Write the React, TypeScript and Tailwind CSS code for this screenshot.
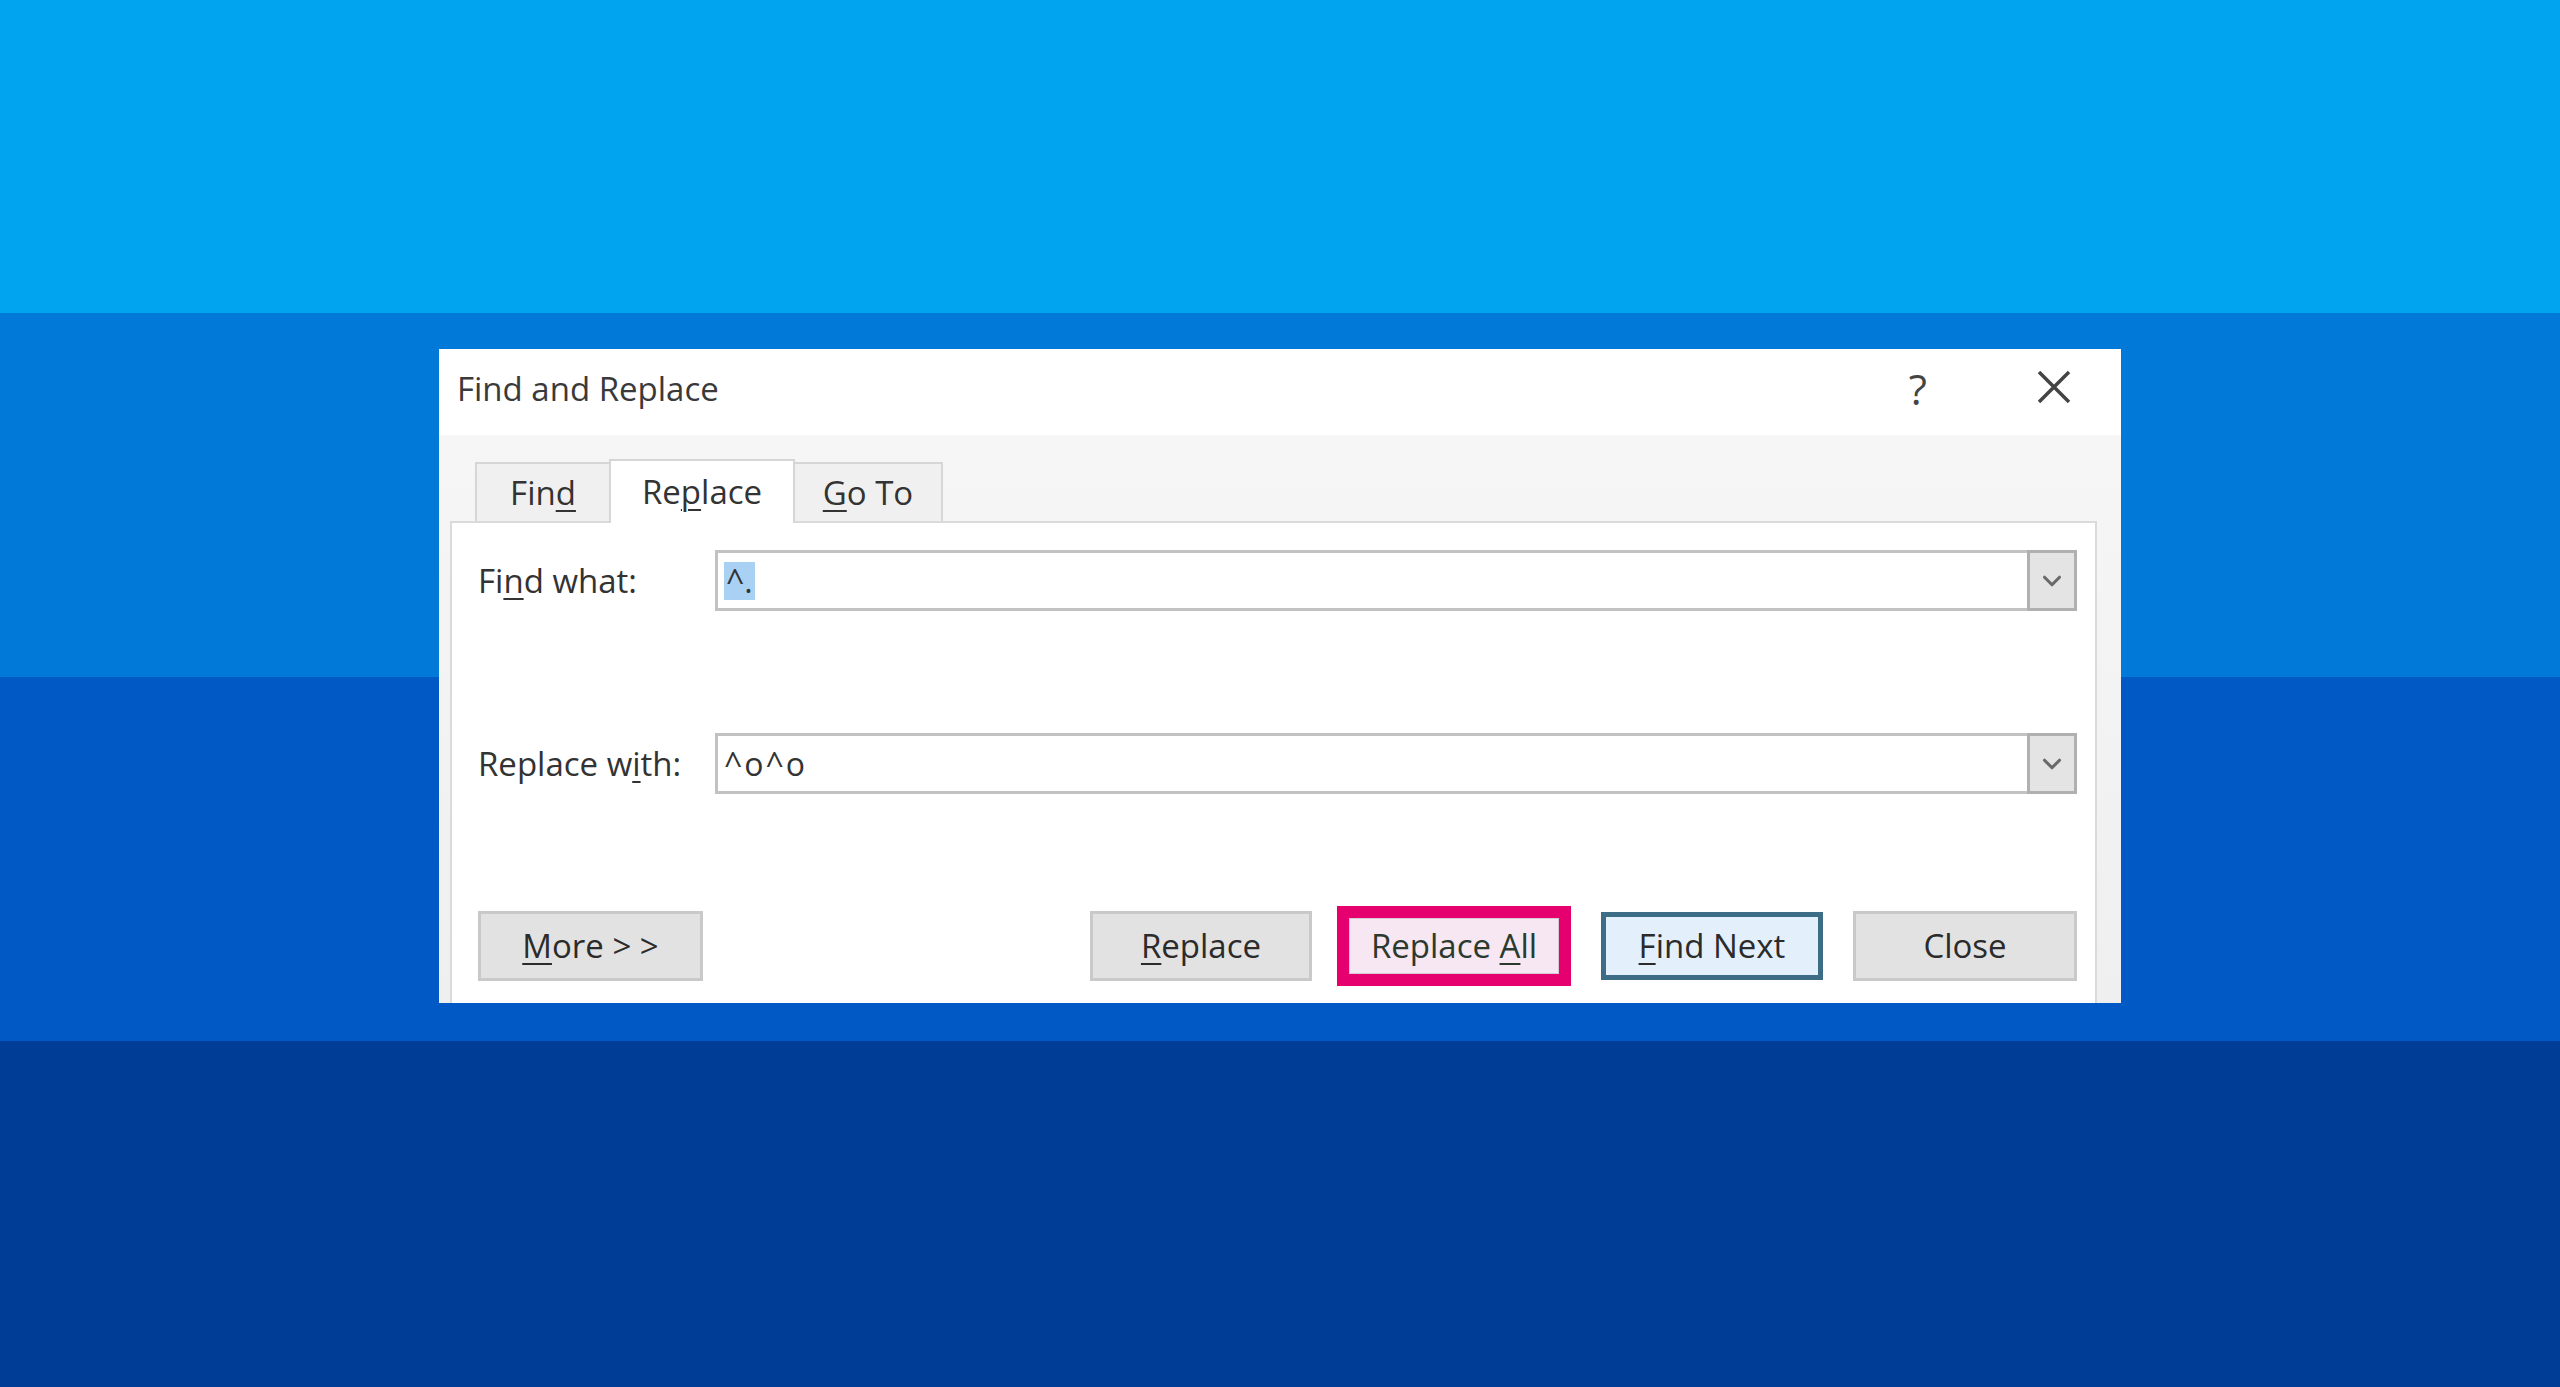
import React from 'react';
import { ChevronDown } from 'lucide-react';

const U = ({ children }: { children: React.ReactNode }) => (
  <span className="underline decoration-[2px] underline-offset-[5px]">{children}</span>
);

function ComboInput({ children }: { children: React.ReactNode }) {
  return (
    <div className="flex-1 h-[61px] flex border-[3px] border-[#c2c2c2] bg-white">
      <div className="flex-1 flex items-center pl-[6px] text-[32px] text-[#333]">{children}</div>
      <div className="w-[50px] -my-[3px] -mr-[3px] flex items-center justify-center bg-[#e4e4e4] border-[3px] border-[#b0b0b0]">
        <ChevronDown className="w-[30px] h-[30px] text-[#6a6a6a]" strokeWidth={2.5} />
      </div>
    </div>
  );
}

function GrayButton({ children, width }: { children: React.ReactNode; width: string }) {
  return (
    <div className={`${width} h-[70px] flex items-center justify-center bg-[#e2e2e2] border-[3px] border-[#c9c9c9] text-[33px] text-[#2b2b2b]`}>
      {children}
    </div>
  );
}

export default function App() {
  return (
    <div className="w-[2560px] h-[1387px] overflow-hidden pt-[349px] pl-[439px] font-['Open_Sans',sans-serif] bg-[linear-gradient(to_bottom,#00a4ef_0px,#00a4ef_313px,#0079d8_313px,#0079d8_677px,#0059c4_677px,#0059c4_1041px,#003d96_1041px)]">
      <div className="w-[1682px] h-[654px] flex flex-col bg-[#f0f0f0]">
        {/* title bar */}
        <div className="h-[86px] shrink-0 bg-white flex items-center pl-[18px]">
          <span className="text-[33px] text-[#3a3a3a] -mt-[6px]">Find and Replace</span>
          <span className="ml-auto text-[42px] text-[#444] -mt-[8px] mr-[110px]">?</span>
          <svg className="w-[34px] h-[32px] mr-[50px] -mt-[10px]" viewBox="0 0 34 32">
            <path d="M2 1 L32 31 M32 1 L2 31" stroke="#444" strokeWidth="3.5" fill="none" />
          </svg>
        </div>

        <div className="flex-1 flex flex-col pl-[11px] pr-[24px] bg-[linear-gradient(to_bottom,#f6f6f6,#efefef)]">
          {/* tabs */}
          <div className="h-[86px] shrink-0 flex items-end pl-[25px]">
            <div className="w-[134px] h-[59px] flex items-center justify-center border-t-2 border-l-2 border-[#d6d6d6] bg-[#f0f0f0] text-[33px] text-[#333]">
              Fin<U>d</U>
            </div>
            <div className="w-[186px] h-[64px] -mb-[2px] relative flex items-center justify-center border-t-2 border-x-2 border-[#d6d6d6] bg-white text-[33px] text-[#333]">
              Re<U>p</U>lace
            </div>
            <div className="w-[148px] h-[59px] flex items-center justify-center border-t-2 border-r-2 border-[#d6d6d6] bg-[#f0f0f0] text-[33px] text-[#333]">
              <U>G</U>o To
            </div>
          </div>

          {/* panel */}
          <div className="flex-1 flex flex-col bg-white border-t-2 border-x-2 border-[#dadada] pl-[26px] pr-[18px] pt-[27px] pb-[17px]">
            <div className="flex items-center">
              <div className="w-[237px] text-[33px] text-[#333]">Fi<U>n</U>d what:</div>
              <ComboInput>
                <span className="bg-[#a8d1f3] px-[2px] leading-[38px]">^.</span>
              </ComboInput>
            </div>

            <div className="flex items-center mt-[122px]">
              <div className="w-[237px] text-[33px] text-[#333]">Replace w<U>i</U>th:</div>
              <ComboInput>
                <span className="tracking-[2px]">^o^o</span>
              </ComboInput>
            </div>

            <div className="flex items-center mt-auto">
              <GrayButton width="w-[225px]">
                <span>
                  <U>M</U>ore &gt; &gt;
                </span>
              </GrayButton>
              <div className="ml-auto">
                <GrayButton width="w-[222px]">
                  <span>
                    <U>R</U>eplace
                  </span>
                </GrayButton>
              </div>
              <div className="ml-[25px] w-[234px] h-[80px] border-[12px] border-[#e6006f] bg-[#f6e7f2] flex items-center justify-center">
                <div className="w-full h-full flex items-center justify-center border border-[#d8c8d4] text-[33px] text-[#2b3a2e]">
                  <span>
                    Replace <U>A</U>ll
                  </span>
                </div>
              </div>
              <div className="ml-[30px] w-[222px] h-[68px] border-[5px] border-[#3d6d86] bg-[#e3f0fb] flex items-center justify-center text-[33px] text-[#2b2b2b]">
                <span>
                  <U>F</U>ind Next
                </span>
              </div>
              <div className="ml-[30px]">
                <GrayButton width="w-[224px]">Close</GrayButton>
              </div>
            </div>
          </div>
        </div>
      </div>
    </div>
  );
}
